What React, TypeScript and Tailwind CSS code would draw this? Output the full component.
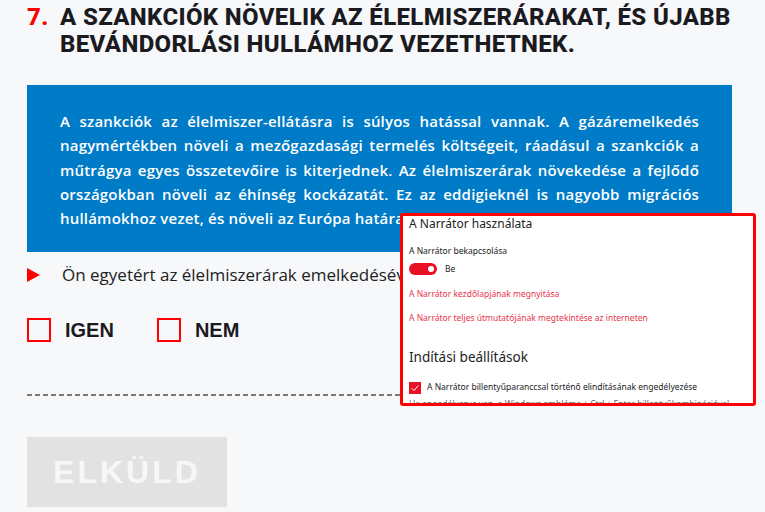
const blueLines = [
  'A szankciók az élelmiszer-ellátásra is súlyos hatással vannak. A gázáremelkedés',
  'nagymértékben növeli a mezőgazdasági termelés költségeit, ráadásul a szankciók a',
  'műtrágya egyes összetevőire is kiterjednek. Az élelmiszerárak növekedése a fejlődő',
  'országokban növeli az éhínség kockázatát. Ez az eddigieknél is nagyobb migrációs',
];

function NarratorPanel() {
  return (
    <div className="absolute left-[400px] top-[213px] w-[356px] h-[193px] overflow-hidden rounded-[3px] border-[3px] border-[#ff0000] bg-white font-['Noto_Sans',sans-serif] text-[#222]">
      <div className="pl-[6px]">
        <div className="text-[12px] leading-[16px]">A Narrátor használata</div>
        <div className="mt-[12px] text-[8.5px] leading-[13px]">A Narrátor bekapcsolása</div>
        <div className="mt-[6px] flex h-[12px] items-center gap-[8px]">
          <span className="flex h-[12px] w-[28px] items-center justify-end rounded-full bg-[#e81123] pr-[3px]">
            <span className="h-[6px] w-[6px] rounded-full bg-white" />
          </span>
          <span className="text-[8.5px]">Be</span>
        </div>
        <div className="mt-[12px] text-[8.5px] leading-[13px] text-[#e8334a]">
          A Narrátor kezdőlapjának megnyitása
        </div>
        <div className="mt-[11px] text-[8.5px] leading-[13px] text-[#e8334a]">
          A Narrátor teljes útmutatójának megtekintése az interneten
        </div>
        <div className="mt-[24px] text-[13.5px] leading-[19px]">Indítási beállítások</div>
        <div className="mt-[14px] flex h-[13px] items-center gap-[6px]">
          <span className="flex h-[12px] w-[12px] items-center justify-center bg-[#e81123]">
            <svg viewBox="0 0 12 12" className="h-[10px] w-[10px]">
              <path d="M2 6.2 L4.8 9 L10 3" fill="none" stroke="white" strokeWidth="1.2" />
            </svg>
          </span>
          <span className="text-[8.5px]">A Narrátor billentyűparanccsal történő elindításának engedélyezése</span>
        </div>
        <div className="mt-[3px] whitespace-nowrap text-[8.5px] leading-[13px] text-[#666]">
          Ha engedélyezve van, a Windows embléma + Ctrl + Enter billentyűkombinációval
        </div>
      </div>
    </div>
  );
}

function App() {
  return (
    <div className="relative h-[512px] w-[765px] overflow-hidden bg-[#f7f8fa] pl-[27px] font-['Open_Sans',sans-serif]">
      <div className="flex pt-[4px] font-['Roboto',sans-serif] text-[24px] font-extrabold uppercase leading-[27px] tracking-[0.35px]">
        <span className="w-[33px] shrink-0 text-[#ff0000]">7.</span>
        <h1 className="text-[#1b1b1f]">
          A szankciók növelik az élelmiszerárakat, és újabb
          <br />
          bevándorlási hullámhoz vezethetnek.
        </h1>
      </div>

      <div className="mt-[27px] w-[705px] bg-[#007bc7] px-[33px] pb-[22px] pt-[24px] text-[15px] font-semibold leading-[24.3px] tracking-[0.2px] text-white">
        {blueLines.map((line) => (
          <div key={line} className="text-justify [text-align-last:justify]">
            {line}
          </div>
        ))}
        <div>hullámokhoz vezet, és növeli az Európa határaira nehezedő nyomást.</div>
      </div>

      <div className="mt-[10px] flex items-center gap-[22px] text-[17px] text-[#222]">
        <svg viewBox="0 0 13 14" className="h-[14px] w-[13px] shrink-0">
          <path d="M0 0 L13 7 L0 14 Z" fill="#ff0000" />
        </svg>
        <span className="whitespace-nowrap">Ön egyetért az élelmiszerárak emelkedésével?</span>
      </div>

      <div className="mt-[27px] flex items-center">
        <label className="flex items-center gap-[14px]">
          <span className="h-[24px] w-[24px] border-2 border-[#ff0000]" />
          <span className="font-['Liberation_Sans',sans-serif] text-[20px] font-bold text-[#1b1b1f]">IGEN</span>
        </label>
        <label className="ml-[43px] flex items-center gap-[14px]">
          <span className="h-[24px] w-[24px] border-2 border-[#ff0000]" />
          <span className="font-['Liberation_Sans',sans-serif] text-[20px] font-bold text-[#1b1b1f]">NEM</span>
        </label>
      </div>

      <div className="mt-[49px] h-[2px] w-[705px] bg-[linear-gradient(to_right,#7a7a7a_5px,transparent_5px)] bg-[length:8px_2px]" />

      <button className="mt-[41px] flex h-[70px] w-[200px] items-center justify-center bg-[#e2e2e2] font-['Liberation_Sans',sans-serif] text-[32px] font-bold tracking-[3px] text-[#f7f7f7]">
        ELKÜLD
      </button>

      <NarratorPanel />
    </div>
  );
}

export default App;
